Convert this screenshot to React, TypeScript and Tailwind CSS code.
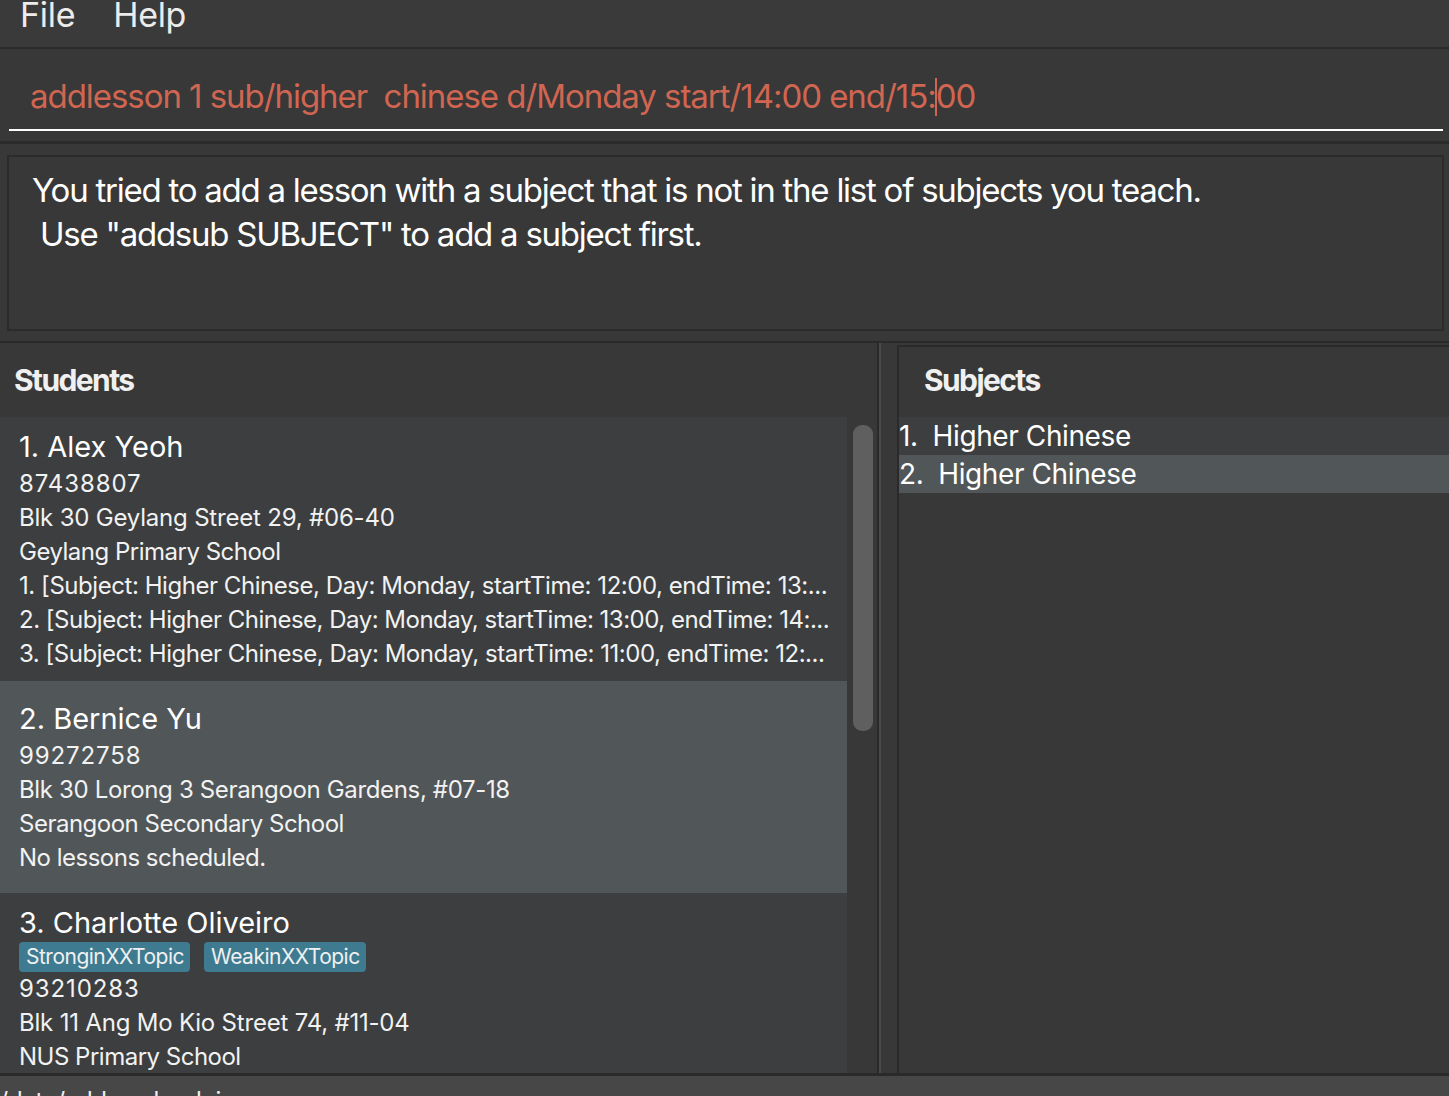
import React from "react";

type Line = { text: string; track: string };

type Student = {
  name: string;
  tags?: string[];
  lines: Line[];
};

const phone = "tracking-[0.9px]";
const mixed = "tracking-[-0.2px]";
const words = "tracking-[-0.5px]";

const students: Student[] = [
  {
    name: "1. Alex Yeoh",
    lines: [
      { text: "87438807", track: phone },
      { text: "Blk 30 Geylang Street 29, #06-40", track: mixed },
      { text: "Geylang Primary School", track: words },
      { text: "1. [Subject: Higher Chinese, Day: Monday, startTime: 12:00, endTime: 13:...", track: "tracking-[-0.45px]" },
      { text: "2. [Subject: Higher Chinese, Day: Monday, startTime: 13:00, endTime: 14:...", track: "tracking-[-0.5px]" },
      { text: "3. [Subject: Higher Chinese, Day: Monday, startTime: 11:00, endTime: 12:...", track: "tracking-[-0.48px]" },
    ],
  },
  {
    name: "2. Bernice Yu",
    lines: [
      { text: "99272758", track: phone },
      { text: "Blk 30 Lorong 3 Serangoon Gardens, #07-18", track: "tracking-[-0.35px]" },
      { text: "Serangoon Secondary School", track: words },
      { text: "No lessons scheduled.", track: words },
    ],
  },
  {
    name: "3. Charlotte Oliveiro",
    tags: ["StronginXXTopic", "WeakinXXTopic"],
    lines: [
      { text: "93210283", track: phone },
      { text: "Blk 11 Ang Mo Kio Street 74, #11-04", track: mixed },
      { text: "NUS Primary School", track: words },
      { text: "No lessons scheduled.", track: words },
    ],
  },
];

const subjects = ["Higher Chinese", "Higher Chinese"];

const font = { fontFamily: "Inter, 'Noto Sans', sans-serif" };

const StudentCard = ({ s, odd }: { s: Student; odd: boolean }) => (
  <div className={odd ? "bg-[#515658] pl-[19px] py-[18px]" : "bg-[#3c3e3f] pl-[19px] py-[10px]"}>
    <div className="text-[29px] leading-[40px] text-white whitespace-nowrap">{s.name}</div>
    {s.tags && (
      <div className="flex gap-[14px] -mt-[1px]">
        {s.tags.map((t) => (
          <span
            key={t}
            className="bg-[#3e7b91] rounded-[4px] pl-[7px] pr-[6px] h-[30px] text-[21px] leading-[30px] text-[#f0f0f0] tracking-[-0.5px]"
          >
            {t}
          </span>
        ))}
      </div>
    )}
    {s.lines.map((l, i) => (
      <div key={i} className={l.track + " text-[24px] leading-[34px] text-[#f2f2f2] whitespace-nowrap"}>
        {l.text}
      </div>
    ))}
  </div>
);

export default function App() {
  return (
    <div style={font} className="w-[1449px] h-[1096px] overflow-hidden bg-[#383838] flex flex-col select-none">
      {/* menu */}
      <div className="h-[47px] shrink-0 bg-[#3a3a3a] flex items-start gap-[38px] pl-[20px] overflow-hidden">
        <span className="text-[34px] leading-[30px] text-[#ececec] tracking-[-0.3px]">File</span>
        <span className="text-[34px] leading-[30px] text-[#ececec] tracking-[-0.3px]">Help</span>
      </div>
      <div className="h-[2px] shrink-0 bg-[#2a2a2a]" />

      {/* command box */}
      <div className="h-[92px] shrink-0 px-[9px] pr-[6px] flex flex-col">
        <div className="pt-[27px] pl-[21px] text-[33px] leading-[40px] text-[#d06651] whitespace-pre tracking-[-1.05px]">
          addlesson 1 sub/higher  chinese d/Monday start/14:00 end/15:
          <span className="relative">
            <span className="absolute left-[-1px] top-[2px] w-[2px] h-[38px] bg-[#d06651]" />
          </span>
          00
        </div>
        <div className="mt-[13px] h-[2px] bg-white" />
      </div>
      <div className="h-[3px] shrink-0 bg-[#2a2a2a]" />

      {/* result box */}
      <div className="h-[197px] shrink-0 pt-[11px] pl-[7px] pr-[5px] pb-[10px]">
        <div className="h-full border-2 border-[#2b2b2b] pt-[11px] pl-[23px] text-[33px] leading-[44px] text-white whitespace-pre tracking-[-1.25px]">
          <div>You tried to add a lesson with a subject that is not in the list of subjects you teach.</div>
          <div> Use "addsub SUBJECT" to add a subject first.</div>
        </div>
      </div>
      <div className="h-[2px] shrink-0 bg-[#2a2a2a]" />

      {/* panels */}
      <div className="flex-1 flex min-h-0">
        <div className="w-[877px] shrink-0 flex flex-col">
          <div className="h-[74px] shrink-0 pt-[17px] pl-[14px] text-[30px] leading-[40px] font-bold text-[#f0f0f0] tracking-[-1.6px]">
            Students
          </div>
          <div className="flex-1 flex min-h-0">
            <div className="w-[847px] overflow-hidden">
              {students.map((s, i) => (
                <StudentCard key={i} s={s} odd={i % 2 === 1} />
              ))}
            </div>
            <div className="w-[30px] pl-[6px] pt-[8px]">
              <div className="w-[20px] h-[306px] rounded-[9px] bg-[#5f5f5f]" />
            </div>
          </div>
        </div>
        <div className="w-[2px] shrink-0 bg-[#2a2a2a]" />
        <div className="w-[2px] shrink-0 bg-[#4a4a4a]" />
        <div className="w-[16px] shrink-0" />
        <div className="flex-1 mt-[2px] border-l-2 border-t-2 border-[#2a2a2a] flex flex-col">
          <div className="h-[70px] shrink-0 pt-[13px] pl-[25px] text-[30px] leading-[40px] font-bold text-[#f0f0f0] tracking-[-1.6px]">
            Subjects
          </div>
          {subjects.map((s, i) => (
            <div
              key={i}
              className={
                (i % 2 === 1 ? "bg-[#515658] " : "bg-[#3c3e3f] ") +
                "h-[38px] text-[28px] leading-[38px] text-white whitespace-pre tracking-[-0.4px]"
              }
            >
              {`${i + 1}.  ${s}`}
            </div>
          ))}
        </div>
      </div>

      {/* status */}
      <div className="h-[3px] shrink-0 bg-[#2a2a2a]" />
      <div className="h-[20px] shrink-0 bg-[#474747] overflow-hidden">
        <div className="pt-[8px] -ml-[7px] text-[24px] leading-[34px] text-[#f0f0f0] whitespace-nowrap tracking-[-0.3px]">
          ./data/addressbook.json
        </div>
      </div>
    </div>
  );
}
